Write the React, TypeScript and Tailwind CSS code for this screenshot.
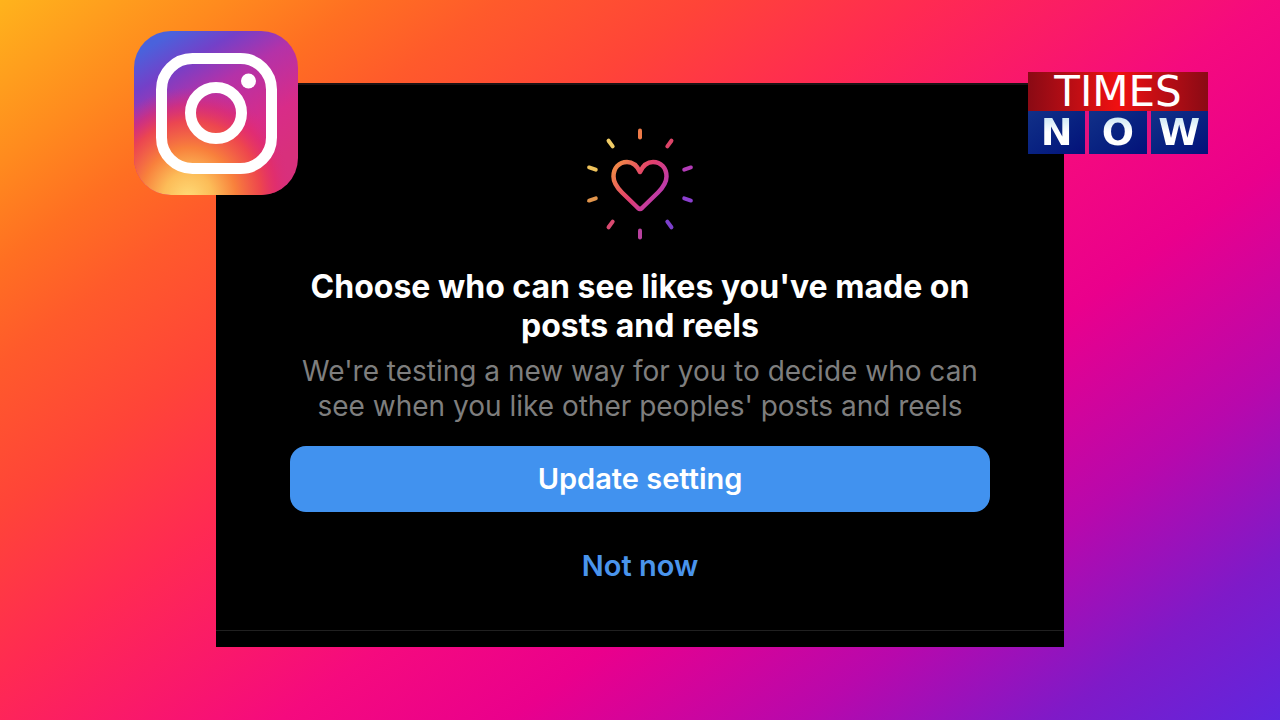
import React from "react";

const RAYS = [
  { angle: 0, color: "#ee7a48" },
  { angle: 36, color: "#dc4468" },
  { angle: 72, color: "#b43cb8" },
  { angle: 108, color: "#8c3fd0" },
  { angle: 144, color: "#7c40cc" },
  { angle: 180, color: "#b8419f" },
  { angle: 216, color: "#d94a70" },
  { angle: 252, color: "#e2954c" },
  { angle: 288, color: "#efc35c" },
  { angle: 324, color: "#f0cc66" },
];

const InstagramLogo = () => (
  <svg viewBox="0 0 164 164" className="h-full w-full" role="img" aria-label="Instagram">
    <defs>
      <linearGradient id="igBase" x1="0.25" y1="0" x2="0.75" y2="0.85">
        <stop offset="0" stopColor="#4a62dc" />
        <stop offset="0.2" stopColor="#7440c8" />
        <stop offset="0.42" stopColor="#b432a8" />
        <stop offset="0.75" stopColor="#d82c88" />
        <stop offset="1" stopColor="#d8307c" />
      </linearGradient>
      <radialGradient
        id="igGlow"
        gradientUnits="userSpaceOnUse"
        cx="0"
        cy="0"
        r="1"
        gradientTransform="translate(54 168) rotate(12) scale(104 112)"
      >
        <stop offset="0" stopColor="#ffdc78" />
        <stop offset="0.24" stopColor="#fcbc58" />
        <stop offset="0.46" stopColor="#f8803c" />
        <stop offset="0.7" stopColor="#f04848" stopOpacity="0.9" />
        <stop offset="0.85" stopColor="#e82c60" stopOpacity="0.5" />
        <stop offset="1" stopColor="#d82c80" stopOpacity="0" />
      </radialGradient>
    </defs>
    <rect width="164" height="164" rx="37" fill="url(#igBase)" />
    <rect width="164" height="164" rx="37" fill="url(#igGlow)" />
    <rect x="27.5" y="27.5" width="110" height="110" rx="31" fill="none" stroke="#fff" strokeWidth="11" />
    <circle cx="82" cy="82" r="25.5" fill="none" stroke="#fff" strokeWidth="11" />
    <circle cx="114.5" cy="50" r="7.5" fill="#fff" />
  </svg>
);

const TimesNowLogo = () => (
  <div className="flex w-[180px] flex-col font-['DejaVu_Sans',sans-serif] text-white">
    <div className="flex h-[39px] items-center justify-center bg-linear-to-r from-[#8a0a14] via-[#f01010] to-[#8a0a14] text-[42px] leading-[39px]">
      TIMES
    </div>
    <div className="grid h-[43px] grid-cols-3 gap-1 bg-[#e4127f] text-center text-[38px] leading-[43px] font-bold">
      {["N", "O", "W"].map((letter) => (
        <div key={letter} className="bg-linear-to-br from-[#123088] to-[#04107a]">
          <span className="bg-linear-to-b from-[#b4dcf0] via-white to-white bg-clip-text text-transparent">
            {letter}
          </span>
        </div>
      ))}
    </div>
  </div>
);

const HeartBurst = () => (
  <svg viewBox="0 0 112 112" className="h-28 w-28" aria-hidden="true">
    <defs>
      <linearGradient id="heartStroke" x1="0" y1="0.2" x2="1" y2="0.8">
        <stop offset="0" stopColor="#f08448" />
        <stop offset="0.45" stopColor="#e2406c" />
        <stop offset="1" stopColor="#b038c0" />
      </linearGradient>
    </defs>
    {RAYS.map((ray) => (
      <path
        key={ray.angle}
        d="M56 2.5V9.5"
        stroke={ray.color}
        strokeWidth="4"
        strokeLinecap="round"
        transform={`rotate(${ray.angle} 56 56)`}
      />
    ))}
    <path
      d="M56 44C53 37.500 48 34 43 34C35 34 29.500 40 29.500 48.500C29.500 55 33 59.500 38 64.500L54 80C55.300 81.200 56.700 81.200 58 80L74 64.500C79 59.500 82.500 55 82.500 48.500C82.500 40 77 34 69 34C64 34 59 37.500 56 44Z"
      fill="none"
      stroke="url(#heartStroke)"
      strokeWidth="4.5"
      strokeLinejoin="round"
    />
  </svg>
);

const App = () => {
  return (
    <main className="min-h-screen overflow-hidden bg-[linear-gradient(144deg,#ffb31c_0%,#ff8a1e_10%,#ff6f22_16%,#ff5a2b_22%,#ff4438_31%,#ff2a52_41%,#f50a7e_56%,#ea008c_66%,#b808ac_79%,#7f1ac8_90%,#6026de_100%)] px-16 pt-[83px] pb-[73px] font-['Inter',sans-serif]">
      <div className="relative mx-auto w-full max-w-[848px]">
        <section className="border-t-2 border-[#1a1214] bg-black pb-4">
          <div className="flex flex-col items-center border-b border-[#202020] px-[74px] pt-[43px] pb-[38px] text-center">
            <HeartBurst />
            <h1 className="mt-[27px] text-[32px] leading-[39px] font-bold text-white">
              Choose who can see likes you've made on
              <br />
              posts and reels
            </h1>
            <p className="mt-[9px] text-[28px] leading-[35px] text-[#7e7e7e]">
              We're testing a new way for you to decide who can
              <br />
              see when you like other peoples' posts and reels
            </p>
            <button
              type="button"
              className="mt-[22px] h-[66px] w-full rounded-2xl bg-[#4192ef] text-[29px] font-semibold text-white"
            >
              Update setting
            </button>
            <button type="button" className="mt-7 h-[52px] px-6 text-[29px] font-semibold text-[#4a94ec]">
              Not now
            </button>
          </div>
        </section>
        <div className="absolute -top-[52px] -left-[82px] h-[164px] w-[164px]">
          <InstagramLogo />
        </div>
        <div className="absolute -top-[11px] -right-36">
          <TimesNowLogo />
        </div>
      </div>
    </main>
  );
};

export default App;
